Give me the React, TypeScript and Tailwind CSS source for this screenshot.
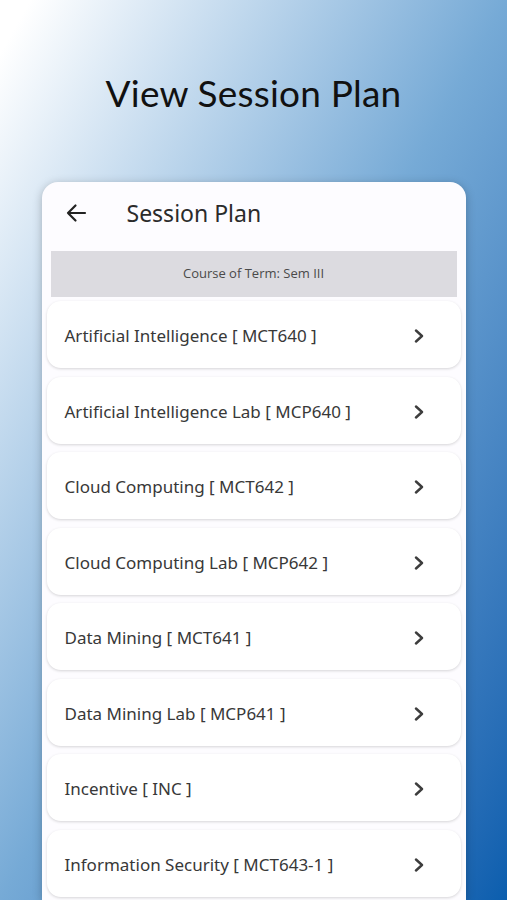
import React from "react";

const rows = [
  "Artificial Intelligence [ MCT640 ]",
  "Artificial Intelligence Lab [ MCP640 ]",
  "Cloud Computing [ MCT642 ]",
  "Cloud Computing Lab [ MCP642 ]",
  "Data Mining [ MCT641 ]",
  "Data Mining Lab [ MCP641 ]",
  "Incentive [ INC ]",
  "Information Security [ MCT643-1 ]",
];

function Chevron() {
  return (
    <svg width="12" height="14" viewBox="0 0 12 14" fill="none">
      <path d="M3 1.5 L9 7 L3 12.5" stroke="#3d3d3d" strokeWidth="2.4" strokeLinecap="round" strokeLinejoin="round" />
    </svg>
  );
}

function BackArrow() {
  return (
    <svg width="22" height="20" viewBox="0 0 22 20" fill="none">
      <path d="M20 10 H3 M10.5 2.5 L3 10 L10.5 17.5" stroke="#222" strokeWidth="2.2" strokeLinecap="round" strokeLinejoin="round" />
    </svg>
  );
}

export default function App() {
  return (
    <div className="w-[507px] h-[900px] overflow-hidden bg-gradient-to-br from-white from-[3%] via-[#76aad6] via-50% to-[#0a5eae] flex flex-col items-center">
      <div className="pt-[68px] h-[182px] w-full text-center">
        <h1 className="text-[37px] leading-[50px] text-[#111] tracking-[0.2px]" style={{ fontFamily: "Lato, 'Open Sans', sans-serif" }}>
          View Session Plan
        </h1>
      </div>
      <div
        className="w-[424px] flex-1 bg-[#fdfcff] rounded-t-[16px] shadow-[0_2px_10px_rgba(0,0,0,0.25)]"
        style={{ fontFamily: "'Noto Sans', sans-serif" }}
      >
        <div className="h-[69px] flex items-center pb-[7px]">
          <div className="ml-[23px] w-[22px] flex items-center">
            <BackArrow />
          </div>
          <div className="ml-[40px] text-[23px] text-[#2b2b2b] leading-none">Session Plan</div>
        </div>
        <div
          className="mx-[9px] h-[46px] bg-[#dcdbe0] flex items-center justify-center text-[13px] font-medium text-[#4a4a4a]"
          style={{ fontFamily: "'Open Sans', sans-serif" }}
        >
          Course of Term: Sem III
        </div>
        <div className="mx-[5px] mt-[4px] flex flex-col gap-[8.5px]">
          {rows.map((r) => (
            <div
              key={r}
              className="h-[67px] bg-white rounded-[14px] shadow-[0_1px_3px_rgba(0,0,0,0.16)] flex items-center justify-between pl-[18px] pr-[36px] pt-[3px]"
            >
              <span className="text-[17px] text-[#383838]">{r}</span>
              <Chevron />
            </div>
          ))}
        </div>
      </div>
    </div>
  );
}
